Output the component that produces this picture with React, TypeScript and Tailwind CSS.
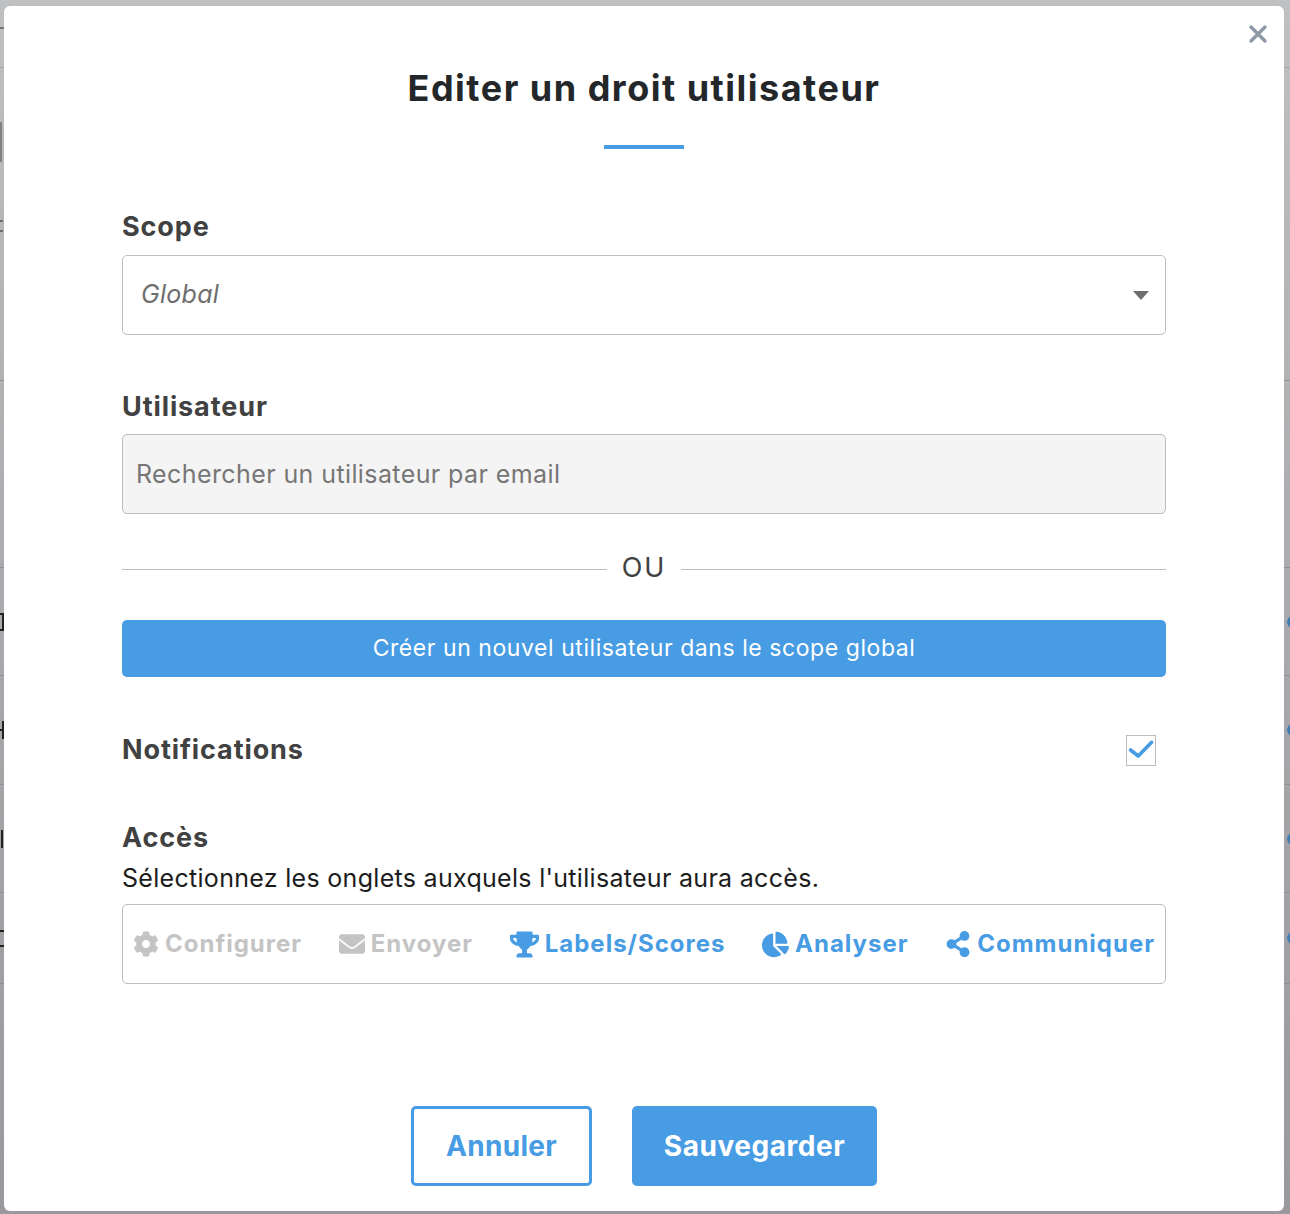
import React from "react";
import { FaCog, FaEnvelope, FaTrophy, FaChartPie, FaShareAlt } from "react-icons/fa";

const font = "font-['Inter','Liberation_Sans',sans-serif]";
const label = "flex w-full items-center text-[27px] font-bold tracking-[0.9px] text-[#414141]";

function Tab({ icon, label, active }: { icon: React.ReactNode; label: string; active?: boolean }) {
  return (
    <div className={`flex items-center gap-[6px] text-[24px] font-bold tracking-[1px] ${active ? "text-[#479ce3]" : "text-[#c4c4c4]"}`}>
      {icon}
      <span>{label}</span>
    </div>
  );
}

function Row({ h, children }: { h: string; children: React.ReactNode }) {
  return (
    <div className={`flex items-center justify-between border-b border-[#8f9094] ${h}`}>
      <div className="w-[4px]">{children}</div>
      <span className="mr-[-9px] h-[12px] w-[12px] rounded-full bg-[#3f80b3]" />
    </div>
  );
}

export default function App() {
  return (
    <div className={`relative h-[1214px] w-[1290px] overflow-hidden bg-gradient-to-b from-[#bfc0c2] via-[#a9aaad] to-[#9a989d] ${font}`}>
      <div className="h-[68px] border-b border-[#a3a4a7] pt-[27px]">
        <div className="h-[2px] w-[4px] bg-[#77787b]" />
      </div>
      <div className="h-[313px] border-b border-[#949598] pt-[54px]">
        <div className="h-[40px] w-[2px] bg-[#808184]" />
        <div className="mt-[58px] h-[2px] w-[3px] bg-[#6a6b6e]" />
        <div className="mt-[8px] h-[2px] w-[3px] bg-[#6a6b6e]" />
      </div>
      <div className="h-[187px] border-b border-[#8f9094]" />
      <Row h="h-[108px]">
        <div className="h-[18px] w-[4px] border-y-2 border-r-2 border-[#222]" />
      </Row>
      <Row h="h-[109px]">
        <div className="flex h-[18px] items-center border-r-2 border-[#222]">
          <div className="h-[2px] w-[2px] bg-[#222]" />
        </div>
      </Row>
      <Row h="h-[108px]">
        <div className="h-[18px] w-[3px] border-r-2 border-[#222]" />
      </Row>
      <Row h="h-[91px]">
        <div className="h-[17px] w-[4px] border-y-2 border-[#222]" />
      </Row>

      <div className="absolute left-[4px] top-[6px] flex h-[1205px] w-[1280px] flex-col items-center rounded-[6px] bg-white px-[118px]">
        <button className="absolute right-[16px] top-[18px] text-[#8d99a6]" aria-label="Fermer">
          <svg width="20" height="20" viewBox="0 0 20 20" fill="none" stroke="currentColor" strokeWidth="3.4" strokeLinecap="round">
            <path d="M3 3 L17 17 M17 3 L3 17" />
          </svg>
        </button>

        <h1 className="mt-[58px] h-[48px] text-[36px] font-bold leading-[48px] tracking-[1.5px] text-[#24272a]">Editer un droit utilisateur</h1>
        <div className="mt-[33px] h-[4px] w-[80px] bg-[#479ce3]" />

        <div className={`mt-[61px] h-[34px] ${label}`}>Scope</div>
        <div className="mt-[11px] flex h-[80px] w-full items-center justify-between rounded-[5px] border border-[#bdbdbd] pl-[18px] pr-[16px]">
          <span className="text-[25px] italic tracking-[0.3px] text-[#6e6e6e]">Global</span>
          <span className="h-0 w-0 border-x-[8px] border-t-[9px] border-x-transparent border-t-[#6e6e6e]" />
        </div>

        <div className={`mt-[55px] h-[34px] ${label}`}>Utilisateur</div>
        <div className="mt-[10px] flex h-[80px] w-full items-center rounded-[5px] border border-[#bdbdbd] bg-[#f4f4f4] pl-[13px] pt-[1px]">
          <span className="text-[25px] tracking-[0.4px] text-[#767676]">Rechercher un utilisateur par email</span>
        </div>

        <div className="mt-[38px] flex h-[32px] w-full items-center gap-[15px] text-[27px] tracking-[2px] text-[#414141]">
          <div className="mt-[3px] h-px flex-1 bg-[#bdbdbd]" />
          <span>OU</span>
          <div className="mt-[3px] h-px flex-1 bg-[#bdbdbd]" />
        </div>

        <div className="mt-[36px] flex h-[57px] w-full items-center justify-center rounded-[5px] bg-[#479ce3] text-[23px] tracking-[0.56px] text-white">
          Créer un nouvel utilisateur dans le scope global
        </div>

        <div className="mt-[57px] flex h-[32px] w-full items-center justify-between pr-[10px]">
          <span className="text-[27px] font-bold tracking-[0.9px] text-[#414141]">Notifications</span>
          <span className="flex h-[31px] w-[30px] items-center justify-center border border-[#bdbdbd] text-[#479ce3]">
            <svg width="28" height="29" viewBox="0 0 28 29" fill="none" stroke="currentColor" strokeWidth="3.6" strokeLinecap="round" strokeLinejoin="round">
              <path d="M3.5 14 L11.3 20 L24.6 6.3" />
            </svg>
          </span>
        </div>

        <div className={`mt-[56px] h-[32px] ${label}`}>Accès</div>
        <div className="mt-[9px] flex h-[32px] w-full items-center text-[25px] tracking-[0.3px] text-[#1c1c1c]">Sélectionnez les onglets auxquels l'utilisateur aura accès.</div>

        <div className="mt-[9px] flex h-[80px] w-full items-center justify-between rounded-[5px] border border-[#bdbdbd] px-[10px]">
          <Tab icon={<FaCog size={26} />} label="Configurer" />
          <Tab icon={<FaEnvelope size={26} />} label="Envoyer" />
          <Tab active icon={<FaTrophy size={29} />} label="Labels/Scores" />
          <Tab active icon={<FaChartPie size={27} />} label="Analyser" />
          <Tab active icon={<FaShareAlt size={26} />} label="Communiquer" />
        </div>

        <div className="mt-[122px] flex gap-[40px]">
          <button className="flex h-[80px] w-[181px] items-center justify-center rounded-[5px] border-[3px] border-[#479ce3] bg-white text-[28px] font-bold tracking-[0.3px] text-[#479ce3]">Annuler</button>
          <button className="flex h-[80px] w-[245px] items-center justify-center rounded-[5px] bg-[#479ce3] text-[28px] font-bold tracking-[0.55px] text-white">Sauvegarder</button>
        </div>
      </div>
    </div>
  );
}
